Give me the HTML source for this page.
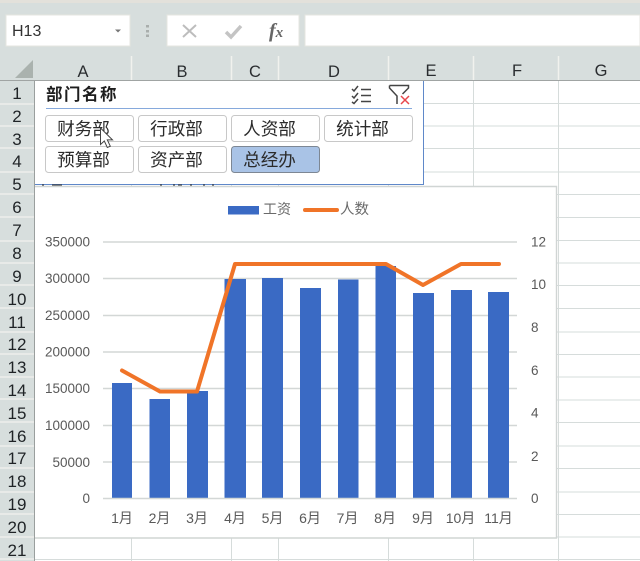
<!DOCTYPE html>
<html><head><meta charset="utf-8">
<style>
html,body{margin:0;padding:0;background:#fff;width:640px;height:561px;overflow:hidden}
svg{display:block}
text{font-family:"Liberation Sans","Noto Sans CJK SC",sans-serif}
.r{font-size:17px;fill:#1f2326;text-anchor:middle}
.c{font-size:16.500px;fill:#2a2d30;text-anchor:middle}
.b{font-size:17.600px;fill:#2b2b2b;text-anchor:middle}
.a{font-size:13.500px;fill:#595959}
.m{font-size:14px;fill:#595959;text-anchor:middle}
</style></head><body>
<svg width="640" height="561" viewBox="0 0 640 561" xmlns="http://www.w3.org/2000/svg">
<rect width="640" height="561" fill="#fff"/>
<rect width="640" height="80" fill="#d7dedd"/>
<rect width="640" height="3" fill="#e3e1db"/>
<!-- formula bar -->
<rect x="6" y="15" width="124" height="31" fill="#fff" stroke="#e6e6e0"/>
<text x="12" y="36" font-size="16" fill="#333">H13</text>
<path d="M115 29.500h6l-3 3z" fill="#777"/>
<g fill="#a9aeac"><rect x="146" y="25" width="3" height="2.500"/><rect x="146" y="30" width="3" height="2.500"/><rect x="146" y="34.500" width="3" height="2.500"/></g>
<rect x="167" y="15" width="132" height="31" fill="#fff" stroke="#e6e6e0"/>
<rect x="305" y="15" width="335" height="31" fill="#fff" stroke="#e6e6e0"/>
<path d="M183 25l13 12M196 25l-13 12" stroke="#bdbdbd" stroke-width="2" fill="none"/>
<path d="M226 32l5 5 10-11" stroke="#c4c4c4" stroke-width="3.500" fill="none"/>
<text x="269" y="37" font-size="20" font-weight="bold" font-style="italic" fill="#666" style="font-family:'Liberation Serif',serif">f<tspan font-size="15">x</tspan></text>
<!-- corner -->
<path d="M33 60v18H15z" fill="#aab2ae"/>
<!-- col header -->
<path d="M131.500 56v24M231.500 56v24M278.500 56v24M388.500 56v24M473.500 56v24M558.500 56v24" stroke="#f1f2ee" stroke-width="1.500"/>
<text class="c" x="83" y="77">A</text><text class="c" x="182" y="77">B</text><text class="c" x="255" y="77">C</text><text class="c" x="334" y="77">D</text><text class="c" x="431" y="76">E</text><text class="c" x="517" y="76">F</text><text class="c" x="601" y="76">G</text>
<rect y="80" width="640" height="1" fill="#a0a4a3"/>
<!-- row header -->
<rect y="81" width="34" height="480" fill="#d7dedd"/>
<rect x="34" y="81" width="1" height="480" fill="#9a9f9e"/>
<path d="M0 104h34M0 126h34M0 148h34M0 172h34M0 194h34M0 217h34M0 241h34M0 263h34M0 285h34M0 308h34M0 332h34M0 354h34M0 377h34M0 399h34M0 422h34M0 446h34M0 468h34M0 492h34M0 514h34M0 537h34M0 559h34" stroke="#f1f2ee" stroke-width="1.200"/>
<text class="r" x="17" y="99">1</text><text class="r" x="17" y="122">2</text><text class="r" x="17" y="145">3</text><text class="r" x="17" y="167">4</text><text class="r" x="17" y="190">5</text><text class="r" x="17" y="213">6</text><text class="r" x="17" y="236">7</text><text class="r" x="17" y="259">8</text><text class="r" x="17" y="282">9</text><text class="r" x="17" y="305">10</text><text class="r" x="17" y="328">11</text><text class="r" x="17" y="350">12</text><text class="r" x="17" y="373">13</text><text class="r" x="17" y="396">14</text><text class="r" x="17" y="419">15</text><text class="r" x="17" y="442">16</text><text class="r" x="17" y="464">17</text><text class="r" x="17" y="487">18</text><text class="r" x="17" y="510">19</text><text class="r" x="17" y="533">20</text><text class="r" x="17" y="556">21</text>
<!-- grid -->
<path d="M35 103.500H640M35 126H640M35 148.500H640M35 172H640M35 194.500H640M35 217.500H640M35 240.500H640M35 263H640M35 285.500H640M35 308.500H640M35 332H640M35 354.500H640M35 377H640M35 400H640M35 422.500H640M35 446H640M35 468.500H640M35 492H640M35 514.500H640M35 537H640M35 559.500H640" stroke="#d6dcdb" stroke-width="1"/>
<path d="M131.500 81V561M231.500 81V561M278.500 81V561M388.500 81V561M473.500 81V561M558.500 81V561" stroke="#d6dcdb" stroke-width="1"/>
<!-- slicer -->
<rect x="35" y="81" width="388" height="103" fill="#fff"/>
<path d="M423.500 81V184.500H35" fill="none" stroke="#5f88c9" stroke-width="1"/>
<path d="M42 185h2M52 185h10M160 185h2M173 185h2M178 185h4M190 185h2M203 185h2M212 185h2" stroke="#222" stroke-width="1"/>
<text x="46" y="100" font-size="16.500" font-weight="bold" fill="#1e1e1e" letter-spacing="1.500">部门名称</text>
<rect x="46" y="108" width="366" height="1" fill="#86a9dc"/>
<g fill="#fff" stroke="#c8c8c8"><rect x="45.500" y="115.500" width="88" height="26" rx="3"/><rect x="138.500" y="115.500" width="88" height="26" rx="3"/><rect x="231.500" y="115.500" width="88" height="26" rx="3"/><rect x="324.500" y="115.500" width="88" height="26" rx="3"/><rect x="45.500" y="146.500" width="88" height="26" rx="3"/><rect x="138.500" y="146.500" width="88" height="26" rx="3"/></g>
<rect x="231.500" y="146.500" width="88" height="26" rx="3" fill="#a9c3e6" stroke="#7d8794"/>
<text class="b" x="83.500" y="135">财务部</text><text class="b" x="176.500" y="135">行政部</text><text class="b" x="269.500" y="135">人资部</text><text class="b" x="362.500" y="135">统计部</text>
<text class="b" x="83.500" y="166">预算部</text><text class="b" x="176.500" y="166">资产部</text><text class="b" x="269.500" y="166">总经办</text>
<!-- slicer icons -->
<path d="M352 89l2 2 4-5M352 96l2 2 4-5M352 102l2 1.500 4-4.500" fill="none" stroke="#444" stroke-width="1.500"/>
<path d="M361 89.500h10M361 95.500h10M361 101.500h10" stroke="#444" stroke-width="1.500"/>
<path d="M389.500 85.500h19v2.500l-6 6M389.500 85.500v2.500l7.500 8v8" fill="none" stroke="#444" stroke-width="1.500"/>
<path d="M401 96l8 8M409 96l-8 8" stroke="#e8474c" stroke-width="1.500"/>
<!-- cursor -->
<path d="M100.500 128v16.500l3.800-3.500 3 6.500 3-1.300-3-6.300h5.200z" fill="#fff" stroke="#444" stroke-width="1"/>
<!-- chart -->
<rect x="35" y="186.500" width="521.500" height="351.500" fill="#fff"/>
<path d="M35 186.500H556.500V538H35" fill="none" stroke="#d0d5d4" stroke-width="1.400"/>
<rect x="228" y="206" width="31" height="8.500" fill="#3a6ac4"/>
<text x="263" y="214" font-size="14" fill="#6a6a6a">工资</text>
<path d="M305 210h32" stroke="#f07428" stroke-width="4" stroke-linecap="round"/>
<text x="340" y="214" font-size="14.500" fill="#6a6a6a">人数</text>
<path d="M103 242H517M103 278.500H517M103 315.500H517M103 352H517M103 388.500H517M103 425.500H517M103 462H517" stroke="#d3d7d6" stroke-width="1.500"/>
<g fill="#3a6ac4">
<rect x="112" y="383" width="20" height="115"/>
<rect x="149.500" y="399" width="20.500" height="99"/>
<rect x="187" y="391" width="21" height="107"/>
<rect x="224.500" y="279" width="21.500" height="219"/>
<rect x="262" y="278" width="21" height="220"/>
<rect x="300" y="288" width="21" height="210"/>
<rect x="338" y="279.500" width="20.500" height="218.500"/>
<rect x="375.500" y="266" width="20.500" height="232"/>
<rect x="413" y="293" width="21" height="205"/>
<rect x="451" y="290" width="21" height="208"/>
<rect x="488" y="292" width="21" height="206"/>
</g>
<path d="M103 498.500H517" stroke="#d3d7d6" stroke-width="1.500"/>
<path d="M122 370.500L160 391.500H197L235 264H386L423 285L461 264H499" fill="none" stroke="#f07428" stroke-width="4" stroke-linecap="round" stroke-linejoin="round"/>
<text class="a" x="90" y="246.500" text-anchor="end">350000</text>
<text class="a" x="90" y="283" text-anchor="end">300000</text>
<text class="a" x="90" y="320" text-anchor="end">250000</text>
<text class="a" x="90" y="356.500" text-anchor="end">200000</text>
<text class="a" x="90" y="393" text-anchor="end">150000</text>
<text class="a" x="90" y="430" text-anchor="end">100000</text>
<text class="a" x="90" y="467" text-anchor="end">50000</text>
<text class="a" x="90" y="503" text-anchor="end">0</text>
<text class="a" x="531" y="246.500">12</text><text class="a" x="531" y="289">10</text><text class="a" x="531" y="332">8</text><text class="a" x="531" y="375">6</text><text class="a" x="531" y="417.500">4</text><text class="a" x="531" y="461">2</text><text class="a" x="531" y="503">0</text>
<text class="m" x="122" y="523">1月</text><text class="m" x="159.500" y="523">2月</text><text class="m" x="197" y="523">3月</text><text class="m" x="235" y="523">4月</text><text class="m" x="272.500" y="523">5月</text><text class="m" x="310" y="523">6月</text><text class="m" x="347.500" y="523">7月</text><text class="m" x="385" y="523">8月</text><text class="m" x="423" y="523">9月</text><text class="m" x="460.500" y="523">10月</text><text class="m" x="498.500" y="523">11月</text>
</svg>
</body></html>
